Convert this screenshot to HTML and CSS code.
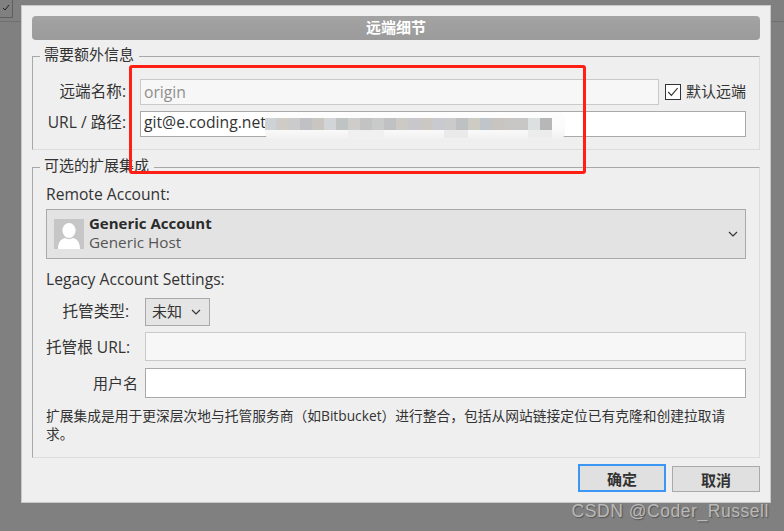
FILE: index.html
```html
<!DOCTYPE html>
<html lang="zh">
<head>
<meta charset="utf-8">
<title>远端细节</title>
<link rel="stylesheet" href="styles.css">
</head>
<body>
<div class="corner"><svg width="12" height="17" viewBox="0 0 12 17"><path d="M3 8l2 2 4-5" fill="none" stroke="#222" stroke-width="1"/></svg></div>
<div class="line line-left"></div>
<div class="line line-right"></div>
<main class="dialog">
  <h1 class="title">远端细节</h1>
  <fieldset class="group group-one">
    <legend>需要额外信息</legend>
    <div class="row row-name">
      <label class="lab lab-one">远端名称:</label>
      <div class="field disabled origin">origin</div>
      <div class="check"><svg width="16" height="16" viewBox="0 0 16 16"><rect x="0.5" y="0.5" width="15" height="15" fill="#fff" stroke="#333"/><path d="M3.2 8l3.2 3.4 6.2-7.2" fill="none" stroke="#333" stroke-width="1.1"/></svg><span>默认远端</span></div>
    </div>
    <div class="row row-url">
      <label class="lab lab-one">URL / 路径:</label>
      <div class="field url">git@e.coding.net</div>
    </div>
  </fieldset>
  <fieldset class="group group-two">
    <legend>可选的扩展集成</legend>
    <div class="heading">Remote Account:</div>
    <div class="account">
      <svg class="avatar" width="30" height="30" viewBox="0 0 30 30"><rect width="30" height="30" fill="#c6c6c6"/><ellipse cx="15" cy="11.5" rx="6.6" ry="7.5" fill="#fff"/><path d="M4 30c0-7 3-10 7-11 2 1.500 6 1.500 8 0 4 1 7 4 7 11z" fill="#fff"/></svg>
      <div class="account-text"><strong>Generic Account</strong><span>Generic Host</span></div>
      <svg class="chev" width="10" height="6" viewBox="0 0 10 6"><path d="M1 1l4 4 4-4" fill="none" stroke="#333" stroke-width="1.200"/></svg>
    </div>
    <div class="heading heading-legacy">Legacy Account Settings:</div>
    <div class="row row-type">
      <label class="lab lab-two">托管类型:</label>
      <div class="select">未知<svg width="10" height="6" viewBox="0 0 10 6"><path d="M1 1l4 4 4-4" fill="none" stroke="#333" stroke-width="1.100"/></svg></div>
    </div>
    <div class="row row-root">
      <label class="lab lab-two">托管根 URL:</label>
      <div class="field disabled grow"></div>
    </div>
    <div class="row row-user">
      <label class="lab lab-user">用户名</label>
      <div class="field grow tall"></div>
    </div>
    <p class="note">扩展集成是用于更深层次地与托管服务商（如Bitbucket）进行整合，包括从网站链接定位已有克隆和创建拉取请求。</p>
  </fieldset>
  <div class="actions">
    <button class="btn primary">确定</button>
    <button class="btn">取消</button>
  </div>
</main>
<div class="smudge"><div class="pixels"></div><div class="pixels-low"></div></div>
<div class="callout"></div>
<div class="mark">CSDN @Coder_Russell</div>
</body>
</html>
```
FILE: styles.css
```css
* { box-sizing: border-box; }
html, body { margin: 0; height: 100%; }
body {
  position: relative;
  width: 784px;
  height: 531px;
  overflow: hidden;
  background: #808080;
  padding: 5px 13px 0 21px;
  font-family: "Open Sans", "Noto Sans CJK SC", sans-serif;
  font-size: 15px;
  color: #333;
}
.corner {
  position: absolute;
  left: 0;
  top: 0;
  width: 13px;
  height: 18px;
  border: 1px solid #5f5f5f;
  border-width: 0 1px 1px 0;
}
.line { position: absolute; top: 21px; height: 1px; background: #707070; }
.line-left { left: 0; width: 21px; }
.line-right { left: 771px; width: 13px; }
.dialog {
  width: 750px;
  height: 498px;
  background: #efefef;
  border: 1px solid #c8c8c8;
  padding: 10px 10px 0;
}
.title {
  margin: 0 0 7px;
  height: 24px;
  border-radius: 4px;
  background: linear-gradient(#a3a3a3, #9b9b9b);
  color: #fff;
  font-size: 15px;
  font-weight: 700;
  line-height: 23px;
  text-align: center;
}
.group {
  margin: 0;
  padding: 0 13px;
  width: 728px;
  border: 1px solid #a8a8a8;
  border-bottom-color: #dcdcdc;
  border-right-color: #dcdcdc;
  min-width: 0;
}
.group legend {
  margin-left: -6px;
  padding: 0 5px 0 4px;
  color: #333;
  font-size: 15px;
  line-height: 18px;
  white-space: nowrap;
  transform: translateY(-2px);
}
.group-one { height: 103px; margin-bottom: 8px; }
.group-two { height: 300px; }
.row { display: flex; align-items: center; }
.row-name { margin-top: 14px; height: 26px; }
.row-url { margin-top: 6px; height: 26px; }
.row-type { margin-top: 9px; height: 28px; }
.row-root { margin-top: 6px; height: 29px; }
.row-user { margin-top: 7px; height: 30px; }
.lab { flex: none; text-align: right; white-space: nowrap; font-size: 15.600px; padding-bottom: 2px; }
.lab-one { width: 80px; margin-right: 14px; padding-bottom: 4px; }
.lab-two { width: 83px; margin-right: 16px; }
.lab-user { width: 92px; margin-right: 7px; font-size: 15px; }
.row-url .lab { padding-bottom: 6px; }
.row-type .lab { padding-bottom: 4px; }
.row-root .lab { padding-bottom: 0; }
.field {
  height: 100%;
  border: 1px solid #a9a9a9;
  background: #fff;
  padding: 0 3px;
  font-size: 15.700px;
  line-height: 20px;
  color: #333;
}
.disabled { background: #f7f7f7; border-color: #c9c9c9; color: #8f8f8f; }
.origin { width: 519px; line-height: 24px; }
.url { width: 606px; }
.grow { flex: 1; }
.check { display: flex; align-items: center; margin-left: 6px; font-size: 15px; white-space: nowrap; }
.check span { margin-left: 5px; padding-bottom: 3px; }
.heading { margin-top: 8px; line-height: 20px; font-size: 15.650px; }
.heading-legacy { margin-top: 10px; }
.account {
  display: flex;
  align-items: center;
  margin-top: 5px;
  height: 50px;
  background: #e3e3e3;
  border: 1px solid #a9a9a9;
  padding: 0 7px;
}
.avatar { flex: none; }
.account-text { display: flex; flex-direction: column; margin-left: 5px; line-height: 19px; padding-bottom: 2px; }
.account-text strong { font-size: 15px; font-weight: 700; color: #2b2b2b; }
.account-text span { font-size: 15.300px; color: #555; }
.chev { margin-left: auto; margin-right: 0; }
.select {
  display: flex;
  align-items: center;
  width: 65px;
  height: 100%;
  padding: 0 0 3px 6px;
  background: #e5e5e5;
  border: 1px solid #a9a9a9;
  font-size: 15px;
}
.select svg { margin: 3px 0 0 9px; }
.note { margin: 9px 0 0; font-size: 13.750px; line-height: 18px; color: #333; }
.actions {
  display: flex;
  justify-content: flex-end;
  align-items: flex-end;
  gap: 6px;
  width: 728px;
  margin-top: 6px;
}
.btn {
  width: 88px;
  height: 26px;
  padding: 0;
  background: #e0e0e0;
  border: 1px solid #a9a9a9;
  color: #333;
  font: 700 15px "Open Sans", "Noto Sans CJK SC", sans-serif;
}
.primary { height: 28px; border: 2px solid #3c96f4; margin-bottom: 0; }
.smudge {
  position: absolute;
  left: 265px;
  top: 112px;
  width: 300px;
  height: 27px;
  border-radius: 6px;
  background: linear-gradient(#fdfdfd, #fbfbfb 60%, #f1f1f1);
}
.pixels {
  position: absolute;
  left: 0;
  top: 6px;
  width: 287px;
  height: 12px;
  background: linear-gradient(90deg,
    #ced3d8 0 11px, #cfcbc7 11px 23px, #cbcbcb 23px 35px, #bfc1c4 35px 47px,
    #c9c6c2 47px 59px, #d2d5d7 59px 71px, #bfc3c3 71px 83px, #cecdca 83px 95px,
    #c3c3c3 95px 107px, #c8cbc9 107px 119px, #bfc1c3 119px 131px, #cdcac6 131px 143px,
    #c8c8cc 143px 155px, #cbc8c3 155px 167px, #c9cacf 167px 179px, #cbcbcb 179px 191px,
    #bec1c2 191px 203px, #cecbc5 203px 215px, #c0c5ca 215px 227px, #c8c5c1 227px 239px,
    #c9c7c5 239px 263px, #dde0e0 263px 275px, #b7b7b7 275px 287px);
}
.pixels-low {
  position: absolute;
  left: 83px;
  top: 18px;
  width: 204px;
  height: 8px;
  background: linear-gradient(90deg,
    #f0f0f0 0 36px, transparent 36px 96px, #eaeaea 96px 120px,
    transparent 120px 180px, #ececec 180px 204px);
}
.callout {
  position: absolute;
  left: 129px;
  top: 65px;
  width: 457px;
  height: 109px;
  border: 3px solid #ff1f15;
  border-radius: 3px;
}
.mark {
  position: absolute;
  right: 15px;
  top: 501px;
  color: #b9b9b9;
  font: 17.500px/20px "Liberation Sans", sans-serif;
  letter-spacing: 0.550px;
  text-shadow: 1px 1px 1px #555;
}
```
